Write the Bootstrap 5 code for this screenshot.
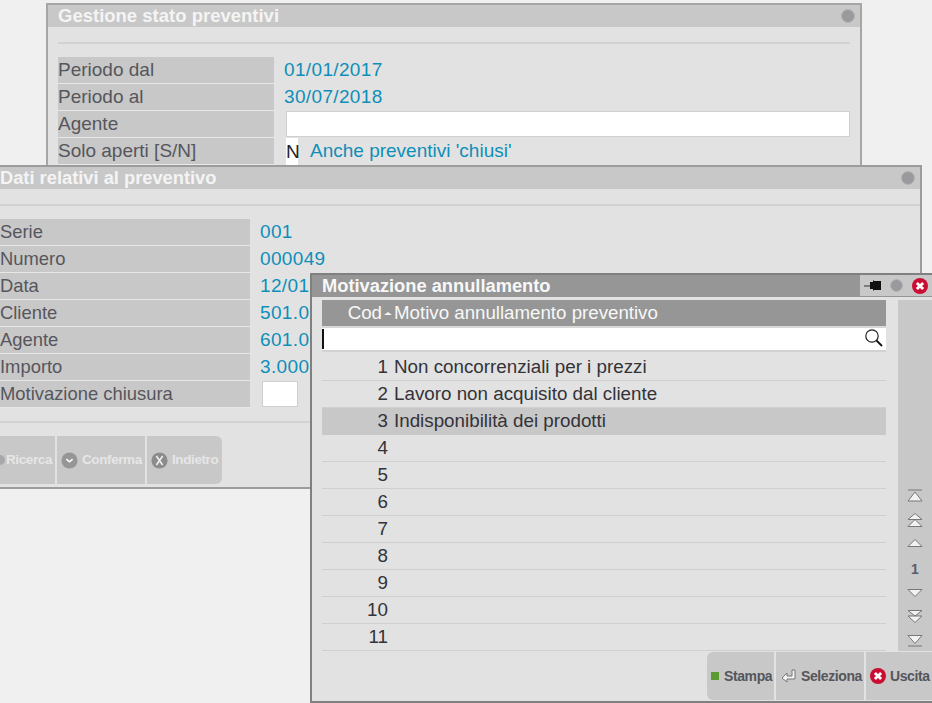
<!DOCTYPE html>
<html lang="it"><head><meta charset="utf-8">
<link href="https://cdn.jsdelivr.net/npm/bootstrap@5.3.0/dist/css/bootstrap.min.css" rel="stylesheet">
<style>
html,body{height:100%;margin:0}
body{background:#f0f0f0;overflow:hidden;font-family:"Liberation Sans",Arial,sans-serif;font-size:19px;line-height:1;position:relative}
.win{position:absolute;background:#e2e2e2;border:2px solid #a6a6a6;overflow:hidden}
#w1{left:46px;top:3px;width:816px;height:164px}
#w2{left:-14px;top:165px;width:936px;height:324px;border-color:#9c9c9c}
#w3{left:310px;top:273px;width:622px;height:430px;border-color:#808080;border-right:0}
.ttl{height:22px;background:#c8c8c8;color:#f4f4f4;font-weight:700;font-size:18.500px;padding-left:10px;line-height:22px}
#w2 .ttl{padding-left:12px;font-size:18.300px}
#w3 .ttl{background:#969696;color:#f8f8f8;font-size:18.300px}
.dot{width:14px;height:14px;border-radius:50%;background:#9a9a9e;border:1px solid #b4b4b4;margin-right:5px}
.sep{height:2px;background:#d2d2d2;margin-top:15px}
.frow{height:27px;display:flex;align-items:stretch}
.lab{background:#c8c8c8;color:#56565c;border-bottom:1px solid #e8e8e8;line-height:25px;flex:none}
.val{color:#0e8fb8;line-height:25px;padding-left:10px;white-space:nowrap}
.num{letter-spacing:.35px}
.inp{background:#fff;border:1px solid #cfcfcf;height:26px}
#w1 .body{padding:0 10px}
#w1 .lab{width:216px}
#w2 .body{padding:0 0 0 12px}
#w2 .lab{width:250px;font-size:18.400px}
.btns{display:flex;gap:2px}
.tb{height:48px;background:#c8c8c8;display:flex;align-items:center;font-weight:700;font-size:14px;white-space:nowrap;letter-spacing:-.4px}
.ghost{color:#e6e6e6;font-size:13.500px;letter-spacing:-.4px}
.tb svg{flex:none}
.ctl{background:#c8c8c8;width:72px;height:21px;padding-left:4px;letter-spacing:0}
.hd{height:26px;background:#969696;color:#f8f8f8;display:flex;line-height:26px;font-size:18.700px}
.hcod{width:60px;text-align:right;flex:none}
.cod{width:66px;text-align:right;flex:none}
.srch{height:26px;background:#fff;border-bottom:2px solid #d2d2d2;border-top:2px solid #d8d8d8;position:relative}
.srch i{position:absolute;left:0;top:1px;width:2px;height:20px;background:#111}
.lrow{height:27px;display:flex;line-height:26px;color:#333338;border-bottom:1px solid #cfcfcf;font-size:18.800px}
.lrow.on{background:#c8c8c8;border-bottom:0}
.lrow .m{margin-left:6px}
.rail{width:34px;background:#c8c8c8;flex:none;height:351px;margin-left:12px;display:flex;flex-direction:column;align-items:center;justify-content:flex-end;padding-bottom:4px}
.rail svg{display:block}
.rail b{font-size:14px;color:#55606c;line-height:12px;font-weight:700;margin:16px 0 14px}
.list{width:564px;margin-left:10px;flex:none}
.gtop{margin-bottom:11px}
.gnext{margin-bottom:12px}
.gd{margin-bottom:13px}
</style></head><body>

<div class="win" id="w1">
 <div class="ttl d-flex justify-content-between align-items-center"><span>Gestione stato preventivi</span><span class="dot"></span></div>
 <div class="body">
  <div class="sep"></div><div style="height:13px"></div>
  <div class="frow"><div class="lab">Periodo dal</div><div class="val num">01/01/2017</div></div>
  <div class="frow"><div class="lab">Periodo al</div><div class="val num">30/07/2018</div></div>
  <div class="frow"><div class="lab">Agente</div><div class="inp flex-grow-1" style="margin-left:12px"></div></div>
  <div class="frow"><div class="lab">Solo aperti [S/N]</div><div class="inp text-center" style="margin-left:12px;width:12px;border:0;color:#222;line-height:27px;height:27px">N</div><div class="val" style="padding-left:12px">Anche preventivi 'chiusi'</div></div>
 </div>
</div>

<div class="win" id="w2">
 <div class="ttl d-flex justify-content-between align-items-center"><span>Dati relativi al preventivo</span><span class="dot"></span></div>
 <div class="body">
  <div class="sep"></div><div style="height:13px"></div>
  <div class="frow"><div class="lab">Serie</div><div class="val num">001</div></div>
  <div class="frow"><div class="lab">Numero</div><div class="val num">000049</div></div>
  <div class="frow"><div class="lab">Data</div><div class="val num">12/01</div></div>
  <div class="frow"><div class="lab">Cliente</div><div class="val num">501.0</div></div>
  <div class="frow"><div class="lab">Agente</div><div class="val num">601.0</div></div>
  <div class="frow"><div class="lab">Importo</div><div class="val num">3.000</div></div>
  <div class="frow"><div class="lab">Motivazione chiusura</div><div class="inp" style="margin-left:12px;width:36px"></div></div>
  <div class="sep" style="margin-top:13px;margin-left:-12px"></div>
  <div class="btns" style="margin-top:13px;margin-left:-12px;width:234px">
   <div class="tb ghost" style="width:67px;padding-left:12px;gap:1px"><svg width="5" height="12"><circle cx="0" cy="6" r="5" fill="#a8a8a8"/></svg>Ricerca</div>
   <div class="tb ghost" style="width:88px;padding-left:4px;gap:4px"><svg width="17" height="17" viewBox="0 0 19 19"><circle cx="9.500" cy="9.500" r="9" fill="#969696"/><path d="M6 8l3.500 3L13 8" fill="none" stroke="#fff" stroke-width="1.600"/></svg>Conferma</div>
   <div class="tb ghost flex-grow-1 rounded-end" style="padding-left:4px;gap:4px"><svg width="17" height="17" viewBox="0 0 19 19"><circle cx="9.500" cy="9.500" r="9" fill="#8c8c8c"/><path d="M6 4.500l7 10M13 4.500l-7 10" stroke="#eee" stroke-width="1.800"/></svg>Indietro</div>
  </div>
 </div>
</div>

<div class="win" id="w3">
 <div class="ttl d-flex justify-content-between" style="padding-right:0"><span>Motivazione annullamento</span>
  <span class="tb ctl">
   <svg width="17" height="12" viewBox="0 0 17 12"><path d="M0 6h6" stroke="#666" stroke-width="1.500"/><path d="M6 2h3V0l1 1h7v9h-7l-1 1V9H6z" fill="#111"/></svg>
   <span class="dot" style="margin:0 0 0 9px;width:13px;height:13px"></span>
   <svg width="16" height="16" viewBox="0 0 18 18" style="margin-left:9px"><circle cx="9" cy="9" r="9" fill="#cc0d33"/><path d="M5.500 5.500l7 7M12.500 5.500l-7 7" stroke="#fff" stroke-width="3.200"/></svg>
  </span>
 </div>
 <div class="d-flex" style="height:355px;padding-top:3px">
  <div class="list">
   <div class="hd"><span class="hcod">Cod</span><svg width="12" height="26" viewBox="0 0 12 26"><path d="M2 15l4-3 4 3z" fill="#f4f4f4"/></svg><span>Motivo annullamento preventivo</span></div>
   <div class="srch"><i></i><svg width="18" height="18" viewBox="0 0 18 18" style="position:absolute;right:3px;top:1px"><circle cx="7" cy="7" r="6.200" fill="none" stroke="#222" stroke-width="1.200"/><path d="M11.500 11.500l5.500 5.500" stroke="#111" stroke-width="1.800"/></svg></div>
   <div style="height:2px"></div>
   <div class="lrow"><span class="cod">1</span><span class="m">Non concorrenziali per i prezzi</span></div>
   <div class="lrow"><span class="cod">2</span><span class="m">Lavoro non acquisito dal cliente</span></div>
   <div class="lrow on"><span class="cod">3</span><span class="m">Indisponibilità dei prodotti</span></div>
   <div class="lrow"><span class="cod">4</span></div>
   <div class="lrow"><span class="cod">5</span></div>
   <div class="lrow"><span class="cod">6</span></div>
   <div class="lrow"><span class="cod">7</span></div>
   <div class="lrow"><span class="cod">8</span></div>
   <div class="lrow"><span class="cod">9</span></div>
   <div class="lrow"><span class="cod">10</span></div>
   <div class="lrow"><span class="cod">11</span></div>
  </div>
  <div class="rail">
   <svg class="gtop" width="16" height="13" viewBox="0 0 16 13"><path d="M1 1h14M8 3l7 9H1z" fill="#f2f2f2" stroke="#777"/></svg>
   <svg class="gnext" width="16" height="14" viewBox="0 0 16 14"><path d="M8 .5l7 6H1zM8 6.500l7 7H1z" fill="#f2f2f2" stroke="#777"/></svg>
   <svg width="16" height="8" viewBox="0 0 16 8"><path d="M8 .5l7 7H1z" fill="#f2f2f2" stroke="#777"/></svg>
   <b>1</b>
   <svg class="gd" width="16" height="8" viewBox="0 0 16 8"><path d="M1 .5h14l-7 7z" fill="#f2f2f2" stroke="#777"/></svg>
   <svg class="gnext" width="16" height="13" viewBox="0 0 16 13"><path d="M1 .5h14L8 6zM1 6h14l-7 6.500z" fill="#f2f2f2" stroke="#777"/></svg>
   <svg width="16" height="12" viewBox="0 0 16 12"><path d="M1 .5h14l-7 8zM1 11h14" fill="#f2f2f2" stroke="#777"/></svg>
  </div>
 </div>
 <div class="btns justify-content-end">
  <div class="tb rounded-start" style="width:67px;color:#55555c;padding-left:4px;gap:5px"><span style="width:8px;height:8px;background:#5c9a34"></span>Stampa</div>
  <div class="tb" style="width:88px;color:#55555c;padding-left:5px;gap:5px"><svg width="15" height="14" viewBox="0 0 15 14"><path d="M1 9l5-5v3h5V1h3v9H6v3z" fill="#f4f4f4" stroke="#777"/></svg>Seleziona</div>
  <div class="tb" style="width:66px;color:#55555c;padding-left:4px;gap:4px"><svg width="16" height="16" viewBox="0 0 18 18"><circle cx="9" cy="9" r="9" fill="#cc0d33"/><path d="M5.500 5.500l7 7M12.500 5.500l-7 7" stroke="#fff" stroke-width="3.200"/></svg>Uscita</div>
 </div>
</div>
</body></html>
